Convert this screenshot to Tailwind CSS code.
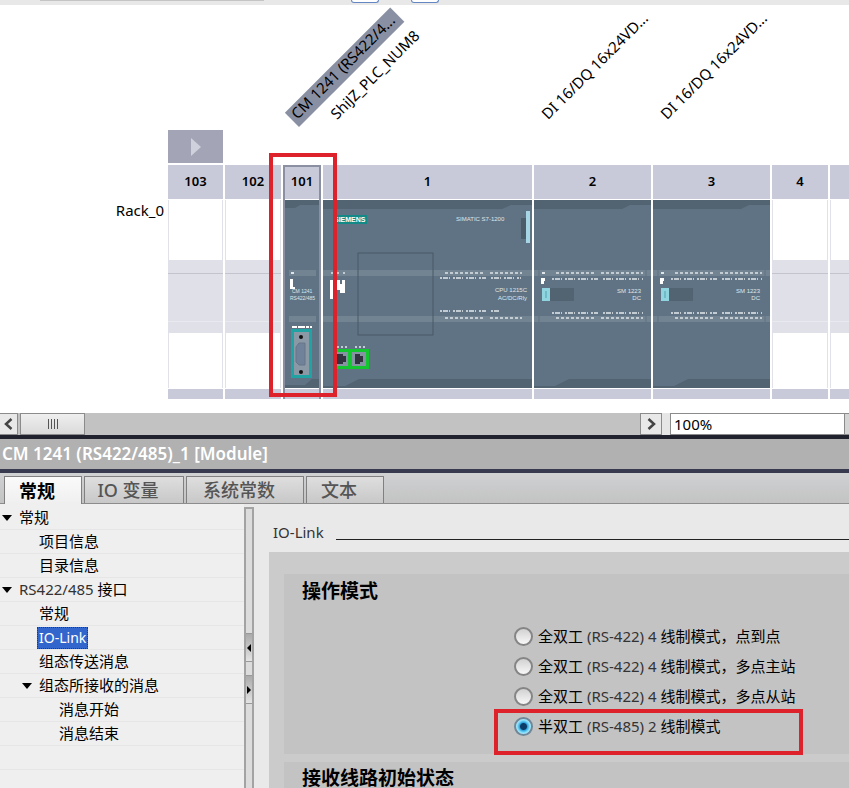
<!DOCTYPE html>
<html lang="zh-CN">
<head>
    <meta charset="UTF-8">
    <meta name="viewport" content="width=device-width, initial-scale=1">
    <title>CM 1241 (RS422/485)_1</title>
    <script src="https://cdn.jsdelivr.net/npm/@tailwindcss/browser@4"></script>
</head>
<body class="flex h-screen flex-col overflow-hidden bg-[#e9e9e9] font-['Noto_Sans','Noto_Sans_CJK_SC',sans-serif] text-[14px] text-black">

    <!-- lower edge of the toolbar -->
    <div class="flex h-[5px] shrink-0 items-start bg-[#e8e8e8]">
        <div class="ml-10 h-px w-56 bg-[#c4c4c4]"></div>
        <div class="ml-[87px] h-[3px] w-7 rounded-b border border-t-0 border-[#6487c4] bg-white"></div>
        <div class="ml-8 h-[3px] w-7 rounded-b border border-t-0 border-[#6487c4] bg-white"></div>
    </div>

    <!-- device view -->
    <section class="relative h-[408px] shrink-0 overflow-hidden bg-white">
        <div class="absolute left-[299px] top-[102px] h-5 w-[149px] origin-bottom-left -rotate-45 whitespace-nowrap bg-[#8a90a3] pl-1 text-[15px] leading-4">CM 1241 (RS422/4...</div>
        <div class="absolute left-[337px] top-[101px] h-5 origin-bottom-left -rotate-45 whitespace-nowrap pl-1 text-[15px] leading-5">ShiJZ_PLC_NUM8</div>
        <div class="absolute left-[548px] top-[101px] h-5 origin-bottom-left -rotate-45 whitespace-nowrap pl-1 text-[15px] leading-5">DI 16/DQ 16x24VD...</div>
        <div class="absolute left-[667px] top-[101px] h-5 origin-bottom-left -rotate-45 whitespace-nowrap pl-1 text-[15px] leading-5">DI 16/DQ 16x24VD...</div>

        <div class="flex pt-[125px]">
            <div class="w-[168px] shrink-0 pr-1 pt-[70px] text-right text-[15px] leading-5">Rack_0</div>
            <div class="min-w-0 flex-1">
                <button class="mb-[2px] flex h-[33px] w-[55px] items-center justify-center bg-[#a3a5b6]" aria-label="展开">
                    <svg width="10" height="18" viewBox="0 0 10 18"><path d="M0 0L10 9L0 18Z" fill="#cfd1dc"/></svg>
                </button>
                <div class="flex h-[234px] gap-[2px] text-center text-[13px] font-semibold leading-8">
                    <div class="flex w-[55px] shrink-0 flex-col">
                        <div class="h-[34px] bg-[#c9cad9]">103</div>
                        <div class="mt-px h-[60px] border-x border-[#e0e1e9]"></div>
                        <div class="h-[14px] border-b border-[#c3c4cd] bg-[#dfe0e8]"></div>
                        <div class="h-12 border-b border-[#e9e9f0] bg-[#dfe0e8]"></div>
                        <div class="h-[11px] bg-[#dfe0e8]"></div>
                        <div class="flex-1 border-x border-[#e0e1e9]"></div>
                        <div class="mt-px h-[10px] bg-[#c9cad9]"></div>
                    </div>
                    <div class="flex w-14 shrink-0 flex-col">
                        <div class="h-[34px] bg-[#c9cad9]">102</div>
                        <div class="mt-px h-[60px] border-x border-[#e0e1e9]"></div>
                        <div class="h-[14px] border-b border-[#c3c4cd] bg-[#dfe0e8]"></div>
                        <div class="h-12 border-b border-[#e9e9f0] bg-[#dfe0e8]"></div>
                        <div class="h-[11px] bg-[#dfe0e8]"></div>
                        <div class="flex-1 border-x border-[#e0e1e9]"></div>
                        <div class="mt-px h-[10px] bg-[#c9cad9]"></div>
                    </div>
                    <div class="flex w-[38px] shrink-0 flex-col border-x-2 border-t-2 border-[#8a8fa2]">
                        <div class="h-8 bg-[#c9cad9] leading-7">101</div>
                        <svg class="my-px block w-full flex-1" viewBox="0 0 34 188" preserveAspectRatio="none" font-family="Liberation Sans" font-size="5" font-weight="normal" fill="#dfe6ea">
                            <rect width="34" height="188" fill="#607384"/>
                            <path d="M0 0H34V5H15L10 8H0ZM0 188V185H20L27 179H34V188Z" fill="#526371"/>
                            <path d="M4 70H31V76H4ZM4 116H31V122H4Z" fill="#728391"/>
                            <rect x="6" y="72" width="3" height="2"/>
                            <path d="M5 79H8V87H10V89H5Z" fill="#fff"/>
                            <text x="7" y="93">CM 1241</text>
                            <text x="5" y="100">RS422/485</text>
                            <path d="M7 127H27" stroke="#fff" stroke-width="2" stroke-dasharray="5 1 7 1 3 1" fill="none"/>
                            <rect x="6" y="129" width="21" height="49" fill="#22a3a3"/>
                            <rect x="9" y="132" width="15" height="43" fill="#8b98a6"/>
                            <path d="M20 143V165H14L11 162V147L14 143Z" fill="#70829a" stroke="#667789"/>
                            <circle cx="16" cy="137" r="2" fill="#111"/><circle cx="16" cy="172" r="2" fill="#111"/>
                        </svg>
                        <div class="h-[10px] bg-[#c9cad9]"></div>
                    </div>
                    <div class="flex w-[209px] shrink-0 flex-col">
                        <div class="h-[34px] bg-[#c9cad9]">1</div>
                        <svg class="my-px block w-full flex-1" viewBox="0 0 209 188" preserveAspectRatio="none" font-family="Liberation Sans" font-weight="normal" fill="#dfe6ea">
                            <rect width="209" height="188" fill="#607384"/>
                            <path d="M0 0H209V5H188L179 9H0ZM0 188V186H22L36 179H209V188Z" fill="#526371"/>
                            <path d="M0 70H209V76H0ZM0 116H209V122H0Z" fill="#728391"/>
                            <rect x="10" y="15" width="34" height="9" fill="#138a87"/>
                            <text x="11" y="22" font-size="7" font-weight="bold" fill="#fff">SIEMENS</text>
                            <text x="133" y="21" font-size="6">SIMATIC S7-1200</text>
                            <rect x="198" y="18" width="5" height="21" fill="#4c5c69"/>
                            <rect x="203" y="11" width="4" height="32" fill="#a6d5e5"/>
                            <rect x="35" y="53" width="75" height="82" fill="none" stroke="#485967"/>
                            <g fill="none" stroke="#c3ccd3">
                                <path d="M8 73H25" stroke-width="2" stroke-dasharray="2 4"/>
                                <path d="M122 73H162M167 73H199M122 118H162M167 118H199" stroke-width="2" stroke-dasharray="3 2"/>
                                <path d="M117 78H163M168 78H198M117 111H163M168 111H176" stroke-width="2" stroke-dasharray="2 1 5 1 1 3"/>
                                <path d="M10 147H24M32 147H43" stroke-width="2" stroke-dasharray="2 2"/>
                            </g>
                            <path d="M7 80H12V84H14V80H17V84H19V80H22V93H17V90H12V99H7Z" fill="#fff"/>
                            <text x="204" y="92" font-size="6" text-anchor="end">CPU 1215C</text>
                            <text x="204" y="100" font-size="6" text-anchor="end">AC/DC/Rly</text>
                            <rect x="12" y="149" width="34" height="20" fill="#13c62f"/>
                            <path d="M12 152H25V166H12ZM29 152H43V166H29Z" fill="#8494a0"/>
                            <path d="M14 154H20V156H23V162H20V164H14ZM32 154H37V156H40V162H37V164H32Z" fill="#32333f"/>
                        </svg>
                        <div class="h-[10px] bg-[#c9cad9]"></div>
                    </div>
                    <div class="flex w-[117px] shrink-0 flex-col">
                        <div class="h-[34px] bg-[#c9cad9]">2</div>
                        <svg class="my-px block w-full flex-1" viewBox="0 0 117 188" preserveAspectRatio="none" font-family="Liberation Sans" font-size="6" font-weight="normal" fill="#dfe6ea">
                            <g id="signal-module">
                                <rect width="117" height="188" fill="#607384"/>
                                <path d="M0 0H117V5H96L88 9H0ZM0 188V186H21L35 179H117V188Z" fill="#526371"/>
                                <path d="M0 70H117V76H0ZM0 116H117V122H0Z" fill="#728391"/>
                                <path d="M5 70V76M112 70V76M5 116V122M112 116V122" stroke="#607384"/>
                                <rect x="8" y="72" width="3" height="2"/>
                                <path d="M7 78H11V81H10V84H7Z" fill="#fff"/>
                                <rect x="8" y="88" width="32" height="13" fill="#526371"/>
                                <rect x="8" y="88" width="8" height="13" fill="#8fd4df"/>
                                <path d="M11 91V98H13V91Z" fill="#6fbcc9"/>
                                <g fill="none" stroke="#c3ccd3">
                                    <path d="M22 73H62M67 73H109M22 118H62M67 118H109" stroke-width="2" stroke-dasharray="3 2"/>
                                    <path d="M18 79H64M69 79H109M18 113H64M69 113H109" stroke-width="2" stroke-dasharray="2 1 5 1 1 3"/>
                                </g>
                                <text x="107" y="93" text-anchor="end">SM 1223</text>
                                <text x="107" y="100" text-anchor="end">DC</text>
                            </g>
                        </svg>
                        <div class="h-[10px] bg-[#c9cad9]"></div>
                    </div>
                    <div class="flex w-[117px] shrink-0 flex-col">
                        <div class="h-[34px] bg-[#c9cad9]">3</div>
                        <svg class="my-px block w-full flex-1" viewBox="0 0 117 188" preserveAspectRatio="none" font-family="Liberation Sans" font-size="6" font-weight="normal" fill="#dfe6ea">
                            <use href="#signal-module"/>
                        </svg>
                        <div class="h-[10px] bg-[#c9cad9]"></div>
                    </div>
                    <div class="flex w-14 shrink-0 flex-col">
                        <div class="h-[34px] bg-[#c9cad9]">4</div>
                        <div class="mt-px h-[60px] border-x border-[#e0e1e9]"></div>
                        <div class="h-[14px] border-b border-[#c3c4cd] bg-[#dfe0e8]"></div>
                        <div class="h-12 border-b border-[#e9e9f0] bg-[#dfe0e8]"></div>
                        <div class="h-[11px] bg-[#dfe0e8]"></div>
                        <div class="flex-1 border-x border-[#e0e1e9]"></div>
                        <div class="mt-px h-[10px] bg-[#c9cad9]"></div>
                    </div>
                    <div class="flex min-w-0 flex-1 flex-col">
                        <div class="h-[34px] bg-[#c9cad9]"></div>
                        <div class="mt-px h-[60px] border-l border-[#e0e1e9]"></div>
                        <div class="h-[14px] border-b border-[#c3c4cd] bg-[#dfe0e8]"></div>
                        <div class="h-12 border-b border-[#e9e9f0] bg-[#dfe0e8]"></div>
                        <div class="h-[11px] bg-[#dfe0e8]"></div>
                        <div class="flex-1 border-l border-[#e0e1e9]"></div>
                        <div class="mt-px h-[10px] bg-[#c9cad9]"></div>
                    </div>
                </div>
            </div>
        </div>
        <div class="absolute left-[269px] top-[148px] h-[244px] w-[68px] border-4 border-[#dd222c]"></div>
    </section>

    <!-- scrollbar and zoom -->
    <div class="flex h-[22px] shrink-0 bg-[#e6e6e6]">
        <button class="flex w-[18px] items-center justify-center border border-l-0 border-[#8b8b8b] bg-[#e8e8e8]" aria-label="向左">
            <svg width="9" height="12" viewBox="0 0 9 12"><path d="M7.5 1L2 6L7.5 11" fill="none" stroke="#444" stroke-width="2.5"/></svg>
        </button>
        <div class="flex flex-1 bg-[#c2c2c2] pl-[2px]">
            <button class="flex w-[65px] items-center justify-center gap-[2px] border border-[#8b8b8b] bg-linear-to-b from-[#efefef] to-[#dadada]" aria-label="滚动条">
                <i class="h-[10px] w-px bg-[#555]"></i><i class="h-[10px] w-px bg-[#555]"></i><i class="h-[10px] w-px bg-[#555]"></i><i class="h-[10px] w-px bg-[#555]"></i>
            </button>
        </div>
        <button class="flex w-[22px] items-center justify-center border border-[#8b8b8b] bg-[#e8e8e8]" aria-label="向右">
            <svg width="9" height="12" viewBox="0 0 9 12"><path d="M1.5 1L7 6L1.5 11" fill="none" stroke="#444" stroke-width="2.5"/></svg>
        </button>
        <input type="text" value="100%" aria-label="缩放" class="ml-2 w-[175px] border border-[#8b8b8b] bg-white px-[3px] text-[15px] leading-5">
        <button class="w-1 border-y border-[#8b8b8b] bg-[#d5d5d5]" aria-label="缩放列表"></button>
    </div>

    <!-- inspector title -->
    <h1 class="h-[38px] shrink-0 border-b-4 border-t-4 border-b-[#383a50] border-t-[#20222e] bg-[#b1b1b1] pl-[2px] text-[17px] font-semibold leading-[30px] text-white">CM 1241 (RS422/485)_1 [Module]</h1>

    <div role="tablist" class="flex h-[31px] shrink-0 items-end gap-[2px] border-b border-[#8c8c8c] bg-linear-to-b from-[#cfd1d3] to-[#c3c3c3] pl-1 text-[18px] leading-6 text-[#555]">
        <button role="tab" aria-selected="true" class="-mb-px h-7 w-[78px] border border-b-0 border-[#808080] bg-linear-to-b from-[#fafafa] to-[#efefef] pr-3 font-bold text-black">常规</button>
        <button role="tab" class="h-[27px] w-[100px] border border-b-0 border-[#808080] bg-linear-to-b from-[#dedede] to-[#c8c8c8] pr-3 font-medium">IO 变量</button>
        <button role="tab" class="h-[27px] w-[118px] border border-b-0 border-[#808080] bg-linear-to-b from-[#dedede] to-[#c8c8c8] pr-3 font-medium">系统常数</button>
        <button role="tab" class="h-[27px] w-[78px] border border-b-0 border-[#808080] bg-linear-to-b from-[#dedede] to-[#c8c8c8] pr-3 font-medium">文本</button>
    </div>

    <div class="flex min-h-0 flex-1">
        <!-- navigation tree -->
        <nav class="w-[244px] shrink-0 bg-[#efefef] pt-[2px] text-[15px] leading-[23px]">
            <ul>
                <li class="flex h-6 items-center border-b border-[#e6e6e6] pl-[2px]"><svg class="mr-[7px]" width="10" height="6" viewBox="0 0 10 6"><path d="M0 0H10L5 6Z"/></svg><a href="#">常规</a></li>
                <li class="h-6 border-b border-[#e6e6e6] pl-[39px]"><a href="#">项目信息</a></li>
                <li class="h-6 border-b border-[#e6e6e6] pl-[39px]"><a href="#">目录信息</a></li>
                <li class="flex h-6 items-center border-b border-[#e6e6e6] pl-[2px]"><svg class="mr-[7px]" width="10" height="6" viewBox="0 0 10 6"><path d="M0 0H10L5 6Z"/></svg><a href="#"><span class="text-[#333]">RS422/485</span> 接口</a></li>
                <li class="h-6 border-b border-[#e6e6e6] pl-[39px]"><a href="#">常规</a></li>
                <li class="flex h-6 items-center border-b border-[#e6e6e6] pl-[37px]"><a href="#" class="h-[22px] border border-dotted border-[#123a9c] bg-[#3366cc] px-px text-[14px] leading-5 text-white" aria-current="page">IO-Link</a></li>
                <li class="h-6 border-b border-[#e6e6e6] pl-[39px]"><a href="#">组态传送消息</a></li>
                <li class="flex h-6 items-center border-b border-[#e6e6e6] pl-[22px]"><svg class="mr-[7px]" width="10" height="6" viewBox="0 0 10 6"><path d="M0 0H10L5 6Z"/></svg><a href="#">组态所接收的消息</a></li>
                <li class="h-6 border-b border-[#e6e6e6] pl-[59px]"><a href="#">消息开始</a></li>
                <li class="h-6 border-b border-[#e6e6e6] pl-[59px]"><a href="#">消息结束</a></li>
                <li class="h-6 border-b border-[#e6e6e6]"></li>
            </ul>
        </nav>

        <!-- splitter -->
        <div class="mt-[3px] flex w-[10px] shrink-0 flex-col border-2 border-b-0 border-[#a3a3a3] bg-[#dcdcdc] pt-[124px]">
            <button class="flex h-[29px] items-center justify-center border-y border-[#999] bg-linear-to-b from-[#aaa] to-[#e4e4e4]" aria-label="收起"><svg width="4" height="8" viewBox="0 0 4 8"><path d="M4 0V8L0 4Z"/></svg></button>
            <button class="mt-[13px] flex h-[29px] items-center justify-center border-y border-[#999] bg-linear-to-b from-[#aaa] to-[#e4e4e4]" aria-label="展开"><svg width="4" height="8" viewBox="0 0 4 8"><path d="M0 0V8L4 4Z"/></svg></button>
        </div>

        <!-- properties -->
        <main class="flex min-w-0 flex-1 flex-col pl-[15px]">
            <div class="flex h-12 shrink-0 items-start pl-1 pt-[18px]">
                <h2 class="text-[15px] leading-5 text-[#333]">IO-Link</h2>
                <div class="ml-3 mt-[17px] h-px flex-1 bg-[#222]"></div>
            </div>
            <div class="flex-1 bg-[#cbcbcb] pl-[15px] pt-[22px]">
                <fieldset class="relative h-[180px] bg-[#c3c3c3] pl-[230px] pt-[47px] text-[15px]">
                    <legend class="float-left -ml-[212px] -mt-[42px] text-[19px] font-bold leading-6">操作模式</legend>
                    <div class="clear-left">
                    <label class="flex h-[30px] items-center gap-[5px]"><input type="radio" name="mode" class="size-[19px] appearance-none rounded-full border-2 border-[#858585] bg-linear-to-b from-[#d2d2d2] to-[#f8f8f8]"><span>全双工 <span class="text-[#333]">(RS-422) 4</span> 线制模式，点到点</span></label>
                    <label class="flex h-[30px] items-center gap-[5px]"><input type="radio" name="mode" class="size-[19px] appearance-none rounded-full border-2 border-[#858585] bg-linear-to-b from-[#d2d2d2] to-[#f8f8f8]"><span>全双工 <span class="text-[#333]">(RS-422) 4</span> 线制模式，多点主站</span></label>
                    <label class="flex h-[30px] items-center gap-[5px]"><input type="radio" name="mode" class="size-[19px] appearance-none rounded-full border-2 border-[#858585] bg-linear-to-b from-[#d2d2d2] to-[#f8f8f8]"><span>全双工 <span class="text-[#333]">(RS-422) 4</span> 线制模式，多点从站</span></label>
                    <label class="flex h-[30px] items-center gap-[5px]"><input type="radio" name="mode" checked class="size-[19px] appearance-none rounded-full border-2 border-[#6f8798] bg-[radial-gradient(circle,#0c3c68_0_3px,#2fa5e0_4px,#7fdcf8_6px,#e8f8ff_9px)]"><span>半双工 <span class="text-[#333]">(RS-485) 2</span> 线制模式</span></label>
                    </div>
                    <div class="pointer-events-none absolute left-[210px] top-[135px] h-[46px] w-[309px] border-4 border-[#dd222c]"></div>
                </fieldset>
                <section class="mt-2 h-10 bg-[#c3c3c3] pl-[18px] pt-1">
                    <h3 class="text-[19px] font-bold leading-6">接收线路初始状态</h3>
                </section>
            </div>
        </main>
    </div>
</body>
</html>
